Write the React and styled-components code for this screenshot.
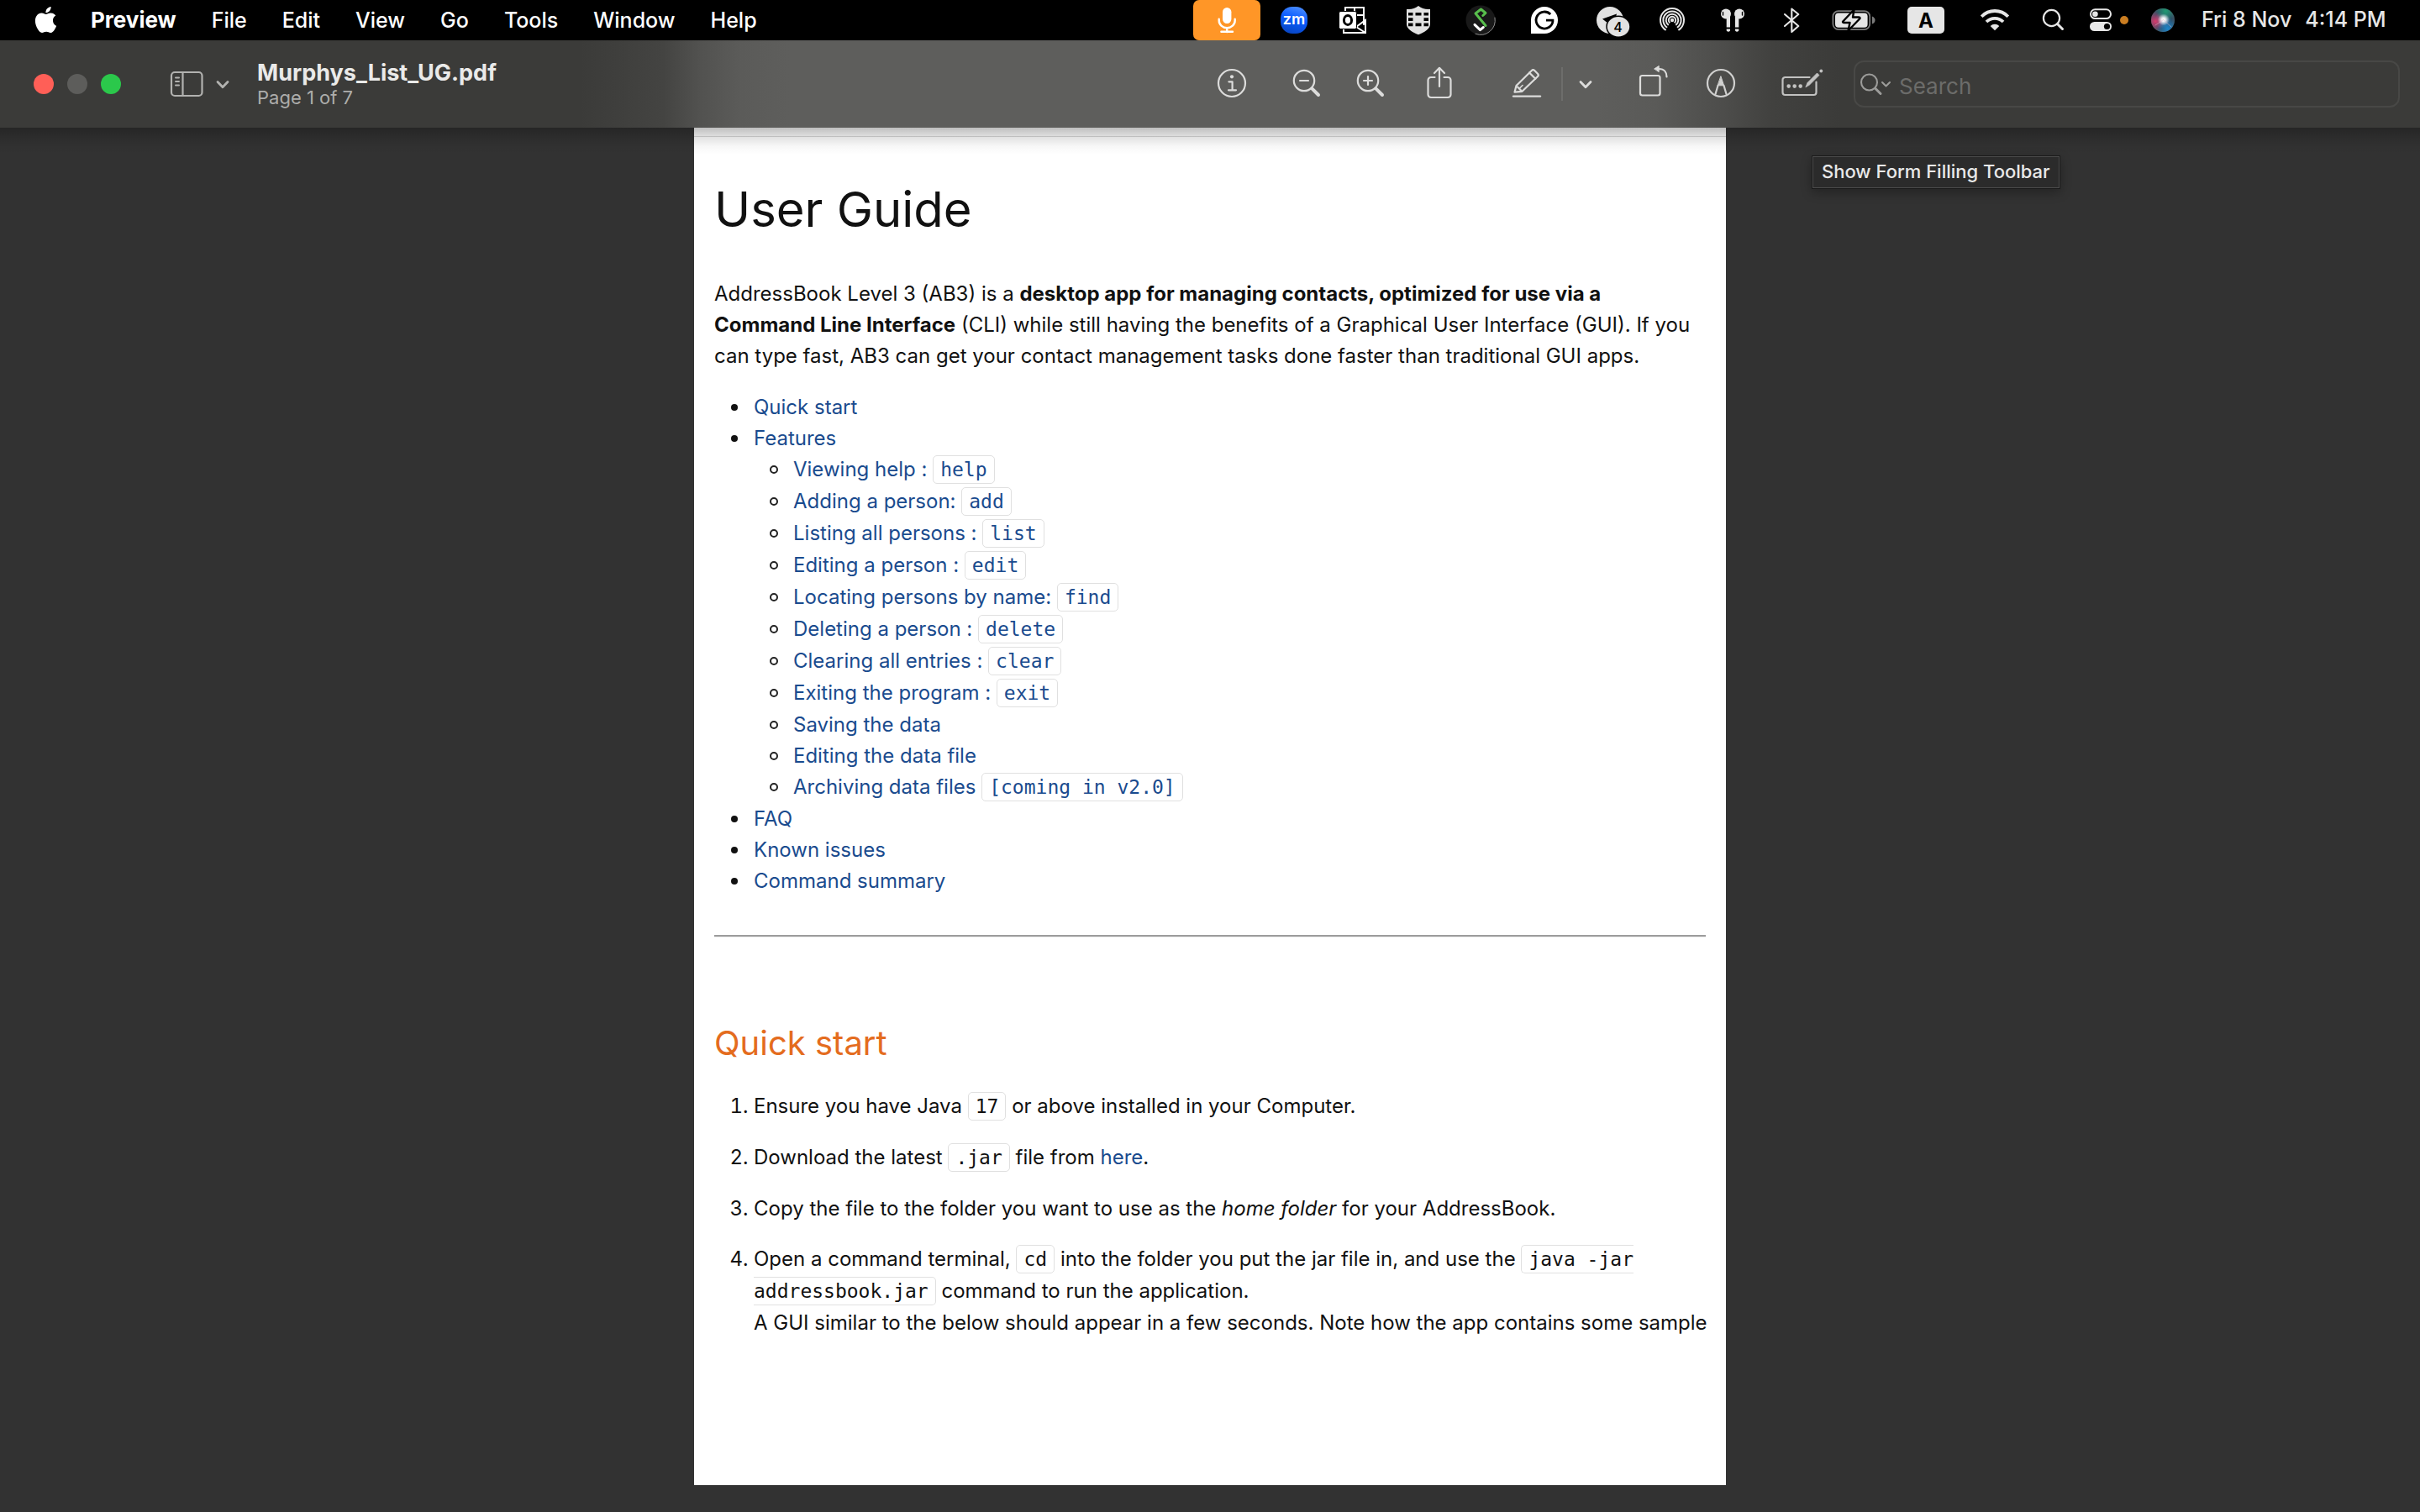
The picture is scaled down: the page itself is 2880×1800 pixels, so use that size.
import React from "react";
import styled, { createGlobalStyle, css } from "styled-components";
import { SiApple } from "react-icons/si";

const sans = `Inter, "Liberation Sans", sans-serif`;
const mono = `"DejaVu Sans Mono", "Liberation Mono", monospace`;

const GlobalStyle = createGlobalStyle`
  *, *::before, *::after { box-sizing: border-box; }
  body { margin: 0; background: #323232; font-family: ${sans}; }
  button { font: inherit; color: inherit; background: none; border: 0; padding: 0; margin: 0; }
`;

const Screen = styled.div`
  min-height: 100vh;
  display: flex;
  flex-direction: column;
`;

/* ---------- menu bar ---------- */

const MenuBar = styled.header`
  height: 48px;
  flex: none;
  display: flex;
  align-items: stretch;
  justify-content: space-between;
  background: #000;
  color: #fff;
  font-size: 25px;
  line-height: 46px;
`;

const Menus = styled.nav`
  display: flex;
  align-items: center;
  padding-left: 19px;
`;

const AppleButton = styled.button`
  width: 68px;
  height: 48px;
  padding: 0 0 2px 2px;
  display: flex;
  align-items: center;
  justify-content: center;
`;

const Menu = styled.button`
  padding: 0 21px;
  height: 48px;
  font-size: ${(p) => (p.$app ? 26 : 25)}px;
  font-weight: ${(p) => (p.$app ? 700 : 500)};
`;

const StatusArea = styled.div`
  display: flex;
  align-items: stretch;
  color: #e6e6e6;
`;

const StatusItem = styled.button`
  width: ${(p) => p.$w}px;
  display: flex;
  align-items: center;
  justify-content: center;
  ${(p) =>
    p.$active &&
    css`
      background: #ff9627;
      border-radius: 7px;
      color: #fff;
    `}
`;

const PrivacyDot = styled.span`
  align-self: center;
  width: 10px;
  height: 10px;
  margin: 0 3px;
  border-radius: 50%;
  background: #cb7e22;
`;

const Clock = styled.button`
  width: 268px;
  padding-left: 8px;
  display: flex;
  gap: 16px;
  font-weight: 500;
  white-space: nowrap;
`;

const Glyph = styled.svg`
  display: block;
  flex: none;
  overflow: visible;
`;

const Icon = ({ size = 48, children, ...rest }) => (
  <Glyph
    width={size}
    height={size}
    viewBox={`${-size / 2} ${-size / 2} ${size} ${size}`}
    fill="none"
    stroke="currentColor"
    strokeLinecap="round"
    strokeLinejoin="round"
    aria-hidden="true"
    {...rest}
  >
    {children}
  </Glyph>
);

const MicIcon = () => (
  <Icon size={32} strokeWidth="2.4">
    <rect x="-5" y="-15" width="10.4" height="19" rx="5.2" fill="currentColor" stroke="none" />
    <path d="M-9.3 -1.2V.4a9.5 8.8 0 0 0 19 0v-1.6M.2 9.5V14M-6.6 13.8H7" />
  </Icon>
);

const ZoomAppIcon = () => (
  <Icon size={32} stroke="none">
    <defs>
      <linearGradient id="zm" x1="0.7" y1="0" x2="0.4" y2="1">
        <stop offset="0" stopColor="#4a8dff" />
        <stop offset="0.45" stopColor="#0b5cff" />
        <stop offset="1" stopColor="#0846c4" />
      </linearGradient>
    </defs>
    <rect x="-16" y="-16" width="32" height="32" rx="14" fill="url(#zm)" />
    <text x="0" y="5" textAnchor="middle" fontFamily="Inter, sans-serif" fontSize="18" fontWeight="600" fill="#fff">
      zm
    </text>
  </Icon>
);

const OutlookIcon = () => (
  <Icon size={32} stroke="#fff" strokeWidth="2" strokeLinejoin="miter">
    <path d="M-9 -10V-15H13V5M2 -15V-3M2 -6H13M-9 -10H2" />
    <path d="M-11 10V15H15V0L4 8L15 15M4 8L-2 4" />
    <rect x="-16.5" y="-10.5" width="21" height="21" rx="2" fill="#fff" stroke="#000" strokeWidth="1" />
    <ellipse cx="-6" cy="0" rx="4.6" ry="5.4" stroke="#000" strokeWidth="3" />
  </Icon>
);

const ShieldIcon = () => (
  <Icon size={36} stroke="none">
    <path
      d="M-14 -13C-8 -12.5 -4 -14 0 -17C4 -14 8 -12.5 14 -13V5C13.5 11 7 14.5 0 17.3C-7 14.5 -13.5 11 -14 5Z"
      fill="#e2e2e2"
    />
    <path
      d="M-12 -9H-6.5V-5.5H-12ZM-3.5 -9H3.5V-5.5H-3.5ZM6.5 -9H12V-5.5H6.5ZM-12 -2.8H-6.5V1H-12ZM6.5 -2.8H12V1H6.5ZM-12 3.6H-6.5V7.2H-12ZM-3.5 3.6H3.5V7.2H-3.5ZM6.5 3.6H12V7.2H6.5Z"
      fill="#050505"
    />
  </Icon>
);

const ShottrIcon = () => (
  <Icon size={36} strokeWidth="3">
    <circle r="17.5" fill="#191919" stroke="none" />
    <path d="M17 -3A17.3 17.3 0 0 1 -6 16.3" stroke="#8d8d8d" strokeWidth="1" />
    <path d="M2.8 -5.5L6 -8.5L0.5 -13L-6 -8L6 6.5" stroke="#58bf4c" />
    <path d="M-7 5.3L-.5 11.6L3.3 8.5" stroke="#fff" />
  </Icon>
);

const GrammarlyIcon = () => (
  <Icon size={32}>
    <path d="M0 -16A16 16 0 1 1 0 16H-16V0A16 16 0 0 1 0 -16Z" fill="#fff" stroke="none" />
    <path d="M7.2 -7A10 10 0 1 0 10 1.2M2 0.2H11.3" stroke="#000" strokeWidth="2.8" strokeLinecap="butt" />
  </Icon>
);

const TelegramIcon = () => (
  <Icon size={40} stroke="none">
    <circle cx="-4" cy="0" r="16" fill="#e2e2e2" />
    <path d="M-13 -1.5L4 -7.5L0 9L-6 3.5L-2 -1L-8 2.5Z" fill="#000" />
    <ellipse cx="6" cy="7.7" rx="14" ry="12.5" fill="#e2e2e2" stroke="#000" strokeWidth="1.5" />
    <text x="5.5" y="13.5" textAnchor="middle" fontFamily="Inter, sans-serif" fontSize="16" fontWeight="500" fill="#000">
      4
    </text>
  </Icon>
);

const arc = (r, open) => {
  const a = (open * Math.PI) / 180;
  const x = r * Math.sin(a);
  const y = r * Math.cos(a);
  return `M${-x} ${y}A${r} ${r} 0 1 1 ${x} ${y}`;
};

const AirDropIcon = () => (
  <Icon size={32} strokeWidth="2" strokeLinecap="butt">
    <path d={arc(14, 32)} />
    <path d={arc(10.6, 34)} />
    <path d={arc(7.3, 36)} />
    <path d={arc(4.2, 40)} />
    <circle r="2.2" fill="currentColor" stroke="none" />
  </Icon>
);

const AirPodsIcon = () => (
  <Icon size={32} stroke="none" fill="currentColor">
    <circle cx="-8" cy="-7.5" r="6" />
    <circle cx="8" cy="-7.5" r="6" />
    <path d="M-7.3 -4H-3V8.6H-7.3ZM3 -4H7.3V8.6H3ZM-7.3 10.4H-3V12.5Q-5 15 -7.3 12.5ZM3 10.4H7.3V12.5Q5 15 3 12.5Z" />
    <path d="M-11.5 -9.5V-6M11.5 -9.5V-6" stroke="#000" strokeWidth="1.4" />
  </Icon>
);

const BluetoothIcon = () => (
  <Icon size={32} strokeWidth="2.1">
    <path d="M-8 -7L8.3 7L.3 14V-13.5L8.3 -7L-8 7" />
  </Icon>
);

const BatteryIcon = () => (
  <Icon size={52} stroke="none">
    <rect x="-24.6" y="-10.9" width="43.8" height="22" rx="6.5" stroke="#7b7b7b" strokeWidth="1.8" />
    <rect x="-22" y="-8.5" width="38.6" height="17.2" rx="4" fill="currentColor" />
    <path d="M22 -4.5Q25.5 -3 25.5 0T22 4.5Z" fill="#7b7b7b" />
    <path
      d="M.5 -12.5L-13 1.8Q-13 3 -11.5 3H-4.5L-6.5 12.5L7.5 -2Q7.8 -3.5 6 -3.5H-1Z"
      fill="currentColor"
      stroke="#000"
      strokeWidth="2.4"
    />
  </Icon>
);

const InputSourceIcon = () => (
  <Icon size={48} stroke="none">
    <rect x="-22" y="-16" width="44" height="32" rx="5" fill="currentColor" />
    <text x="0" y="9" textAnchor="middle" fontFamily="Inter, sans-serif" fontSize="24" fontWeight="700" fill="#000">
      A
    </text>
  </Icon>
);

const WifiIcon = () => (
  <Icon size={36} strokeLinecap="butt">
    <path d="M-15.8 -4.3A22 22 0 0 1 15.8 -4.3" strokeWidth="3.8" />
    <path d="M-10 2A14 14 0 0 1 10 2" strokeWidth="3.8" />
    <path d="M0 12.3L-5.3 7A7.5 7.5 0 0 1 5.3 7Z" fill="currentColor" stroke="none" />
  </Icon>
);

const SpotlightIcon = () => (
  <Icon size={32}>
    <circle cx="-2.5" cy="-2.5" r="9.6" strokeWidth="2.2" />
    <path d="M4.5 4.5L10.5 10.5" strokeWidth="3" />
  </Icon>
);

const ControlCentreIcon = () => (
  <Icon size={32} stroke="none">
    <rect x="-12" y="-12.7" width="24" height="10.8" rx="5.4" stroke="currentColor" strokeWidth="2" />
    <circle cx="-6.6" cy="-7.3" r="3.3" fill="currentColor" />
    <rect x="-13" y="2" width="26" height="11" rx="5.5" fill="currentColor" />
    <circle cx="7.5" cy="7.5" r="3.6" fill="#000" />
  </Icon>
);

const SiriIcon = () => (
  <Icon size={32} stroke="none">
    <defs>
      <radialGradient id="siriBase" cx="0.5" cy="0.5" r="0.5">
        <stop offset="0" stopColor="#7d8fae" />
        <stop offset="0.7" stopColor="#2b4a63" />
        <stop offset="1" stopColor="#3f5665" />
      </radialGradient>
      <radialGradient id="siriPink" cx="0.18" cy="0.55" r="0.42">
        <stop offset="0" stopColor="#d83a6c" />
        <stop offset="1" stopColor="#d83a6c" stopOpacity="0" />
      </radialGradient>
      <radialGradient id="siriGreen" cx="0.62" cy="0.12" r="0.42">
        <stop offset="0" stopColor="#1f9a72" />
        <stop offset="1" stopColor="#1f9a72" stopOpacity="0" />
      </radialGradient>
      <radialGradient id="siriBlue" cx="0.7" cy="0.85" r="0.45">
        <stop offset="0" stopColor="#1d84c9" />
        <stop offset="1" stopColor="#1d84c9" stopOpacity="0" />
      </radialGradient>
      <radialGradient id="siriCore" cx="0.53" cy="0.48" r="0.25">
        <stop offset="0" stopColor="#fff" />
        <stop offset="0.3" stopColor="#fff" stopOpacity="0.9" />
        <stop offset="1" stopColor="#fff" stopOpacity="0" />
      </radialGradient>
    </defs>
    {["Base", "Pink", "Green", "Blue", "Core"].map((n) => (
      <circle key={n} r="14" fill={`url(#siri${n})`} />
    ))}
    <path d="M0 -1L10 8M0 0L-9 6" stroke="#e9b8c8" strokeOpacity="0.5" strokeWidth="1" />
  </Icon>
);

/* ---------- window toolbar ---------- */

const Toolbar = styled.div`
  position: relative;
  z-index: 2;
  height: 104px;
  flex: none;
  display: flex;
  align-items: center;
  padding: 0 24px 0 40px;
  color: #dcdcdb;
  background: linear-gradient(
    90deg,
    #3b3b39 calc(50% - 750px),
    #444442 calc(50% - 650px),
    #525250 calc(50% - 606px),
    #5b5b59 calc(50% - 560px),
    #5e5e5c calc(50% - 500px),
    #5e5e5c calc(50% + 460px),
    #5a5a58 calc(50% + 530px),
    #4d4d4b calc(50% + 610px),
    #41413f calc(50% + 670px),
    #3b3b39 calc(50% + 750px)
  );

  &::after {
    content: "";
    position: absolute;
    left: 0;
    right: 0;
    top: 100%;
    height: 32px;
    pointer-events: none;
    background: linear-gradient(rgba(0, 0, 0, 0.25), rgba(0, 0, 0, 0.11) 12px, rgba(0, 0, 0, 0.03) 22px, transparent);
  }
`;

const Lights = styled.div`
  display: flex;
  gap: 16px;
`;

const Light = styled.button`
  width: 24px;
  height: 24px;
  border-radius: 50%;
  && {
    background: ${(p) => p.$color};
  }
`;

const ToolButton = styled.button`
  position: relative;
  width: ${(p) => p.$w}px;
  height: 104px;
  display: flex;
  align-items: center;
  justify-content: center;
`;

const SidebarControls = styled.div`
  display: flex;
  margin: 0 22px 0 54px;
  color: #b2b2b0;
`;

const DocumentTitle = styled.div`
  flex: 1;
  min-width: 0;
  padding-top: 2px;
`;

const FileName = styled.div`
  font-size: 27px;
  line-height: 30px;
  font-weight: 700;
  color: #eaeae9;
`;

const PageStatus = styled.div`
  font-size: 22px;
  line-height: 28px;
  color: #adadab;
`;

const Tools = styled.div`
  display: flex;
  align-items: center;
`;

const MarkupGroup = styled.div`
  display: flex;
  align-items: center;
  margin: 0 10px 0 6px;
`;

const Divider = styled.span`
  width: 2px;
  height: 40px;
  background: #6d6d6b;
`;

const Tooltip = styled.span`
  position: absolute;
  left: 72px;
  top: 137px;
  height: 40px;
  padding: 0 11px;
  border: 1px solid #1a1a1a;
  box-shadow: inset 0 0 0 1px #4b4b4b, 0 4px 12px rgba(0, 0, 0, 0.3);
  background: #2b2b2b;
  color: #e9e9e9;
  font-size: 22px;
  font-weight: 500;
  line-height: 36px;
  white-space: nowrap;
`;

const SearchField = styled.label`
  width: 650px;
  height: 56px;
  display: flex;
  align-items: center;
  border: 2px solid #484846;
  border-radius: 12px;
  color: #9c9c9a;
`;

const SearchInput = styled.input`
  flex: 1;
  min-width: 0;
  height: 48px;
  padding: 4px 8px 0 4px;
  border: 0;
  outline: 0;
  background: none;
  color: #dcdcdb;
  font: 400 26px ${sans};
  &::placeholder {
    color: #6c6c6a;
    opacity: 1;
  }
`;

const SidebarIcon = () => (
  <Icon size={44} strokeWidth="2.2">
    <rect x="-18" y="-14" width="36.5" height="28" rx="4" />
    <path d="M-4.5 -14V14" />
    <path d="M-13 -7.5H-9M-13 -3H-9M-13 1.5H-9" strokeWidth="2" />
  </Icon>
);

const ChevronIcon = () => (
  <Icon size={20} strokeWidth="2.8">
    <path d="M-6 -2.5L0 3.7L6 -2.5" />
  </Icon>
);

const InfoIcon = () => (
  <Icon size={40} strokeWidth="2.2">
    <circle cx="0" cy="-1" r="16" />
    <circle cx="0" cy="-8.7" r="2.1" fill="currentColor" stroke="none" />
    <path d="M-3.6 -2.7H.6V7.3M-4 7.3H5" />
  </Icon>
);

const ZoomIcon = ({ plus }) => (
  <Icon size={40} strokeWidth="2.2">
    <circle cx="-3" cy="-4" r="12.2" />
    <path d={plus ? "M-8 -4H2M-3 -9V1" : "M-8 -4H2"} />
    <path d="M6.8 5.8L14 13" strokeWidth="4" />
  </Icon>
);

const ShareIcon = () => (
  <Icon size={44} strokeWidth="2.2">
    <path d="M-5.5 -8H-10A3.5 3.5 0 0 0 -13.5 -4.5V12.5A3.5 3.5 0 0 0 -10 16H10A3.5 3.5 0 0 0 13.5 12.5V-4.5A3.5 3.5 0 0 0 10 -8H5.5" />
    <path d="M0 3V-19M-6 -13L0 -19.2L6 -13" />
  </Icon>
);

const HighlightIcon = () => (
  <Icon size={44} strokeWidth="2.2">
    <path d="M-16 14.6H16" strokeWidth="2.4" />
    <path d="M-12.5 2L5.8 -16Q7.5 -17.8 9.3 -16L13 -12.3Q14.6 -10.6 13 -9L-5.5 8.8L-14.5 9.7Z" />
    <path d="M3 -13.5L10.3 -6.2M-11 3.5L-6.5 8" />
    <path d="M-8.5 5L-5 1.5" strokeWidth="1.6" />
  </Icon>
);

const RotateIcon = () => (
  <Icon size={44} strokeWidth="2.2">
    <rect x="-16" y="-10" width="23.5" height="23.5" rx="2.5" />
    <path d="M1 -18.2L6.2 -21.5V-14.8Z" fill="currentColor" strokeWidth="1" />
    <path d="M6.5 -18C12.5 -18 15.5 -14 15.5 -8.5" />
  </Icon>
);

const MarkupIcon = () => (
  <Icon size={40} strokeWidth="2.2" color="#d0d0cf">
    <circle cx="0" cy="-1" r="16" />
    <path d="M0 -9L3.6 1.8H-3.6Z" fill="currentColor" strokeWidth="1" />
    <path d="M-3.5 1.8L-6.5 12M3.5 1.8L6.5 12" />
  </Icon>
);

const FormIcon = () => (
  <Icon size={52} strokeWidth="2.2" color="#c2c2c1">
    <path d="M8.5 -8H-20.5A3 3 0 0 0 -23.5 -5V10A3 3 0 0 0 -20.5 13H13.5A3 3 0 0 0 16.5 10V-2.5" />
    <g fill="currentColor" stroke="none">
      <circle cx="-16.3" cy="2.6" r="2.3" />
      <circle cx="-9.3" cy="2.6" r="2.3" />
      <circle cx="-2.3" cy="2.6" r="2.3" />
      <circle cx="22.3" cy="-15.5" r="1.9" />
      <path d="M4 3.5L6 -1.5L17.5 -13L20 -10.5L8.5 1Z" stroke="currentColor" strokeWidth="0.8" />
    </g>
  </Icon>
);

const SearchIcon = () => (
  <Icon size={48} strokeWidth="2.1">
    <circle cx="-7.5" cy="-2" r="9.5" />
    <path d="M0 5.5L6 11.5" strokeWidth="3" />
    <path d="M8 -2L12.5 2.5L17 -2" />
  </Icon>
);

/* ---------- document ---------- */

const Viewer = styled.main`
  flex: 1;
  display: flex;
  flex-direction: column;
  align-items: center;
  padding-bottom: 32px;
  background: #323232;
`;

const PreviousPage = styled.div`
  width: 100%;
  max-width: 1228px;
  height: 11px;
  background: #fff;
  border-bottom: 1px solid #dadada;
`;

const Page = styled.article`
  flex: 1;
  width: 100%;
  max-width: 1228px;
  padding: 48px 24px 0;
  background: #fff;
  color: #111;
  font-size: 24px;
  line-height: 37px;
`;

const Title = styled.h1`
  margin: 0 0 44px;
  font-size: 58px;
  line-height: 76px;
  font-weight: 400;
`;

const Paragraph = styled.p`
  margin: 0 0 24px;
`;

const Link = styled.a`
  color: #1a4b8e;
  text-decoration: none;
`;

const Contents = styled.ul`
  margin: 0;
  padding-left: 47px;
  list-style: none;
`;

const Entry = styled.li`
  &::before {
    content: "";
    display: inline-block;
    width: 8px;
    height: 8px;
    margin: 0 19px 0 -27px;
    vertical-align: 4px;
    border-radius: 50%;
    background: #111;
    ${(p) =>
      p.$hollow &&
      css`
        width: 10px;
        height: 10px;
        margin: 0 18px 0 -28px;
        vertical-align: 3px;
        border: 2px solid #222;
        background: none;
      `}
  }
`;

const Rule = styled.hr`
  margin: 46px 0 101px;
  border: 0;
  border-top: 2px solid #9c9c9c;
  border-bottom: 1px solid #ededed;
`;

const SectionTitle = styled.h2`
  margin: 0 0 31px;
  font-size: 40px;
  line-height: 50px;
  font-weight: 400;
  color: #e46c1e;
`;

const Steps = styled.ol`
  margin: 0 -20px 0 0;
  padding-left: 47px;
`;

const Step = styled.li`
  margin-bottom: 23px;
`;

const Code = styled.code`
  padding: 3px 8px;
  border: 1px solid #e0e0e0;
  border-radius: 5px;
  font-family: ${mono};
  font-size: 23px;
`;

const menus = ["File", "Edit", "View", "Go", "Tools", "Window", "Help"];

const features = [
  ["Viewing help : ", "help"],
  ["Adding a person: ", "add"],
  ["Listing all persons : ", "list"],
  ["Editing a person : ", "edit"],
  ["Locating persons by name: ", "find"],
  ["Deleting a person : ", "delete"],
  ["Clearing all entries : ", "clear"],
  ["Exiting the program : ", "exit"],
  ["Saving the data"],
  ["Editing the data file"],
  ["Archiving data files ", "[coming in v2.0]"],
];

const statusItems = [
  ["Microphone in use", 80, MicIcon, true],
  ["Zoom", 80, ZoomAppIcon],
  ["Outlook", 60, OutlookIcon],
  ["Firewall", 96, ShieldIcon],
  ["Screenshot", 52, ShottrIcon],
  ["Grammarly", 100, GrammarlyIcon],
  ["Telegram", 64, TelegramIcon],
  ["AirDrop", 76, AirDropIcon],
  ["AirPods", 68, AirPodsIcon],
  ["Bluetooth", 72, BluetoothIcon],
  ["Battery", 76, BatteryIcon],
  ["Input source", 96, InputSourceIcon],
  ["Wi-Fi", 68, WifiIcon],
  ["Spotlight", 72, SpotlightIcon],
  ["Control Centre", 40, ControlCentreIcon],
];

export default function App() {
  return (
    <Screen>
      <GlobalStyle />
      <MenuBar>
        <Menus>
          <AppleButton aria-label="Apple menu">
            <SiApple size={31} />
          </AppleButton>
          <Menu $app>Preview</Menu>
          {menus.map((m) => (
            <Menu key={m}>{m}</Menu>
          ))}
        </Menus>
        <StatusArea>
          {statusItems.map(([label, width, Drawing, active]) => (
            <StatusItem key={label} aria-label={label} $w={width} $active={active}>
              <Drawing />
            </StatusItem>
          ))}
          <PrivacyDot />
          <StatusItem aria-label="Siri" $w={76}>
            <SiriIcon />
          </StatusItem>
          <Clock>
            <span>Fri 8 Nov</span>
            <span>4:14 PM</span>
          </Clock>
        </StatusArea>
      </MenuBar>

      <Toolbar>
        <Lights>
          <Light $color="#ff5f57" aria-label="Close" />
          <Light $color="#5d5d5b" aria-label="Minimise" />
          <Light $color="#2bc84b" aria-label="Full screen" />
        </Lights>
        <SidebarControls>
          <ToolButton $w={48} aria-label="Sidebar">
            <SidebarIcon />
          </ToolButton>
          <ToolButton $w={38} aria-label="View options">
            <ChevronIcon />
          </ToolButton>
        </SidebarControls>
        <DocumentTitle>
          <FileName>Murphys_List_UG.pdf</FileName>
          <PageStatus>Page 1 of 7</PageStatus>
        </DocumentTitle>
        <Tools>
          <ToolButton $w={76} aria-label="Info">
            <InfoIcon />
          </ToolButton>
          <ToolButton $w={102} aria-label="Zoom out">
            <ZoomIcon />
          </ToolButton>
          <ToolButton $w={50} aria-label="Zoom in">
            <ZoomIcon plus />
          </ToolButton>
          <ToolButton $w={114} aria-label="Share">
            <ShareIcon />
          </ToolButton>
          <MarkupGroup>
            <ToolButton $w={82} aria-label="Highlight">
              <HighlightIcon />
            </ToolButton>
            <Divider />
            <ToolButton $w={54} aria-label="Highlight options">
              <ChevronIcon />
            </ToolButton>
          </MarkupGroup>
          <ToolButton $w={88} aria-label="Rotate">
            <RotateIcon />
          </ToolButton>
          <ToolButton $w={72} aria-label="Markup">
            <MarkupIcon />
          </ToolButton>
          <ToolButton $w={122}>
            <FormIcon />
            <Tooltip role="tooltip">Show Form Filling Toolbar</Tooltip>
          </ToolButton>
        </Tools>
        <SearchField>
          <SearchIcon />
          <SearchInput type="text" placeholder="Search" aria-label="Search" />
        </SearchField>
      </Toolbar>

      <Viewer>
        <PreviousPage />
        <Page>
          <Title>User Guide</Title>
          <Paragraph>
            AddressBook Level 3 (AB3) is a{" "}
            <strong>
              desktop app for managing contacts, optimized for use via a Command Line Interface
            </strong>{" "}
            (CLI) while still having the benefits of a Graphical User Interface (GUI). If you can type fast, AB3
            can get your contact management tasks done faster than traditional GUI apps.
          </Paragraph>
          <Contents>
            <Entry>
              <Link href="#quick-start">Quick start</Link>
            </Entry>
            <Entry>
              <Link href="#features">Features</Link>
              <Contents>
                {features.map(([text, command]) => (
                  <Entry key={text} $hollow>
                    <Link href="#features">
                      {text}
                      {command && <Code>{command}</Code>}
                    </Link>
                  </Entry>
                ))}
              </Contents>
            </Entry>
            <Entry>
              <Link href="#faq">FAQ</Link>
            </Entry>
            <Entry>
              <Link href="#known-issues">Known issues</Link>
            </Entry>
            <Entry>
              <Link href="#command-summary">Command summary</Link>
            </Entry>
          </Contents>
          <Rule />
          <SectionTitle id="quick-start">Quick start</SectionTitle>
          <Steps>
            <Step>
              Ensure you have Java <Code>17</Code> or above installed in your Computer.
            </Step>
            <Step>
              Download the latest <Code>.jar</Code> file from <Link href="#releases">here</Link>.
            </Step>
            <Step>
              Copy the file to the folder you want to use as the <em>home folder</em> for your AddressBook.
            </Step>
            <Step>
              Open a command terminal, <Code>cd</Code> into the folder you put the jar file in, and use the{" "}
              <Code>java -jar addressbook.jar</Code> command to run the application.
              <br />A GUI similar to the below should appear in a few seconds. Note how the app contains some
              sample
            </Step>
          </Steps>
        </Page>
      </Viewer>
    </Screen>
  );
}
